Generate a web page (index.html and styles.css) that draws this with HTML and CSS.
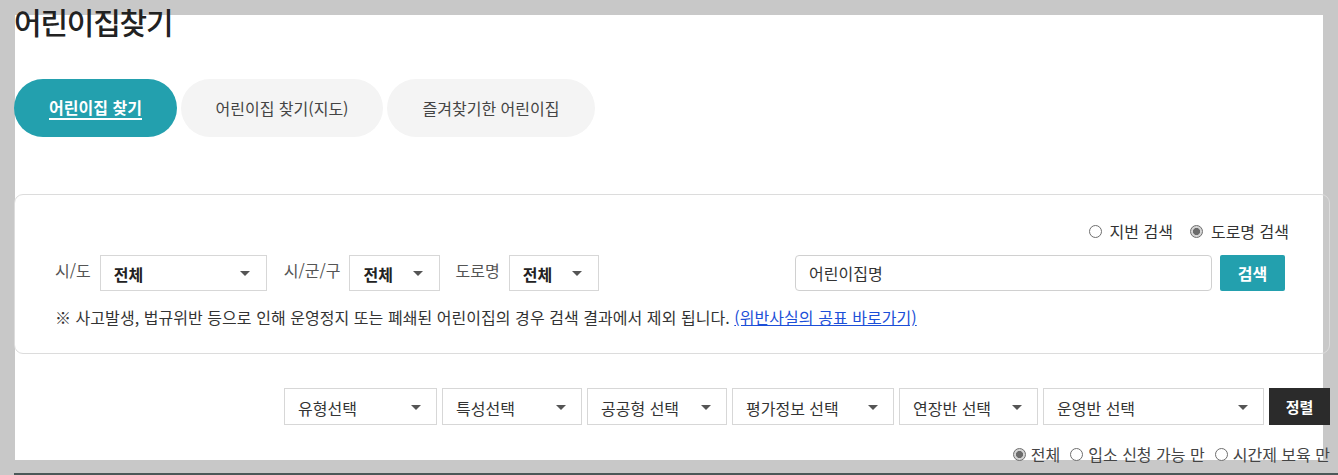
FILE: index.html
```html
<!DOCTYPE html>
<html lang="ko">
<head>
<meta charset="utf-8">
<title>어린이집찾기</title>
<link rel="stylesheet" href="styles.css">
</head>
<body>
<div class="page">
  <div class="inner">
    <h1 class="title">어린이집찾기</h1>
    <nav class="tabs">
      <a class="tab tab-active" href="#"><span class="tab-label">어린이집 찾기</span></a>
      <a class="tab tab-map" href="#">어린이집 찾기(지도)</a>
      <a class="tab tab-fav" href="#">즐겨찾기한 어린이집</a>
    </nav>

    <section class="search-box">
      <div class="radio-row">
        <label class="radio"><span class="radio-dot"></span>지번 검색</label>
        <label class="radio"><span class="radio-dot checked"></span>도로명 검색</label>
      </div>
      <div class="search-row">
        <span class="field-label">시/도</span>
        <div class="select select-bold sel-sido"><span>전체</span><i class="arrow"></i></div>
        <span class="field-label">시/군/구</span>
        <div class="select select-bold sel-sgg"><span>전체</span><i class="arrow"></i></div>
        <span class="field-label">도로명</span>
        <div class="select select-bold sel-road"><span>전체</span><i class="arrow"></i></div>
        <div class="name-group">
          <div class="name-input">어린이집명</div>
          <button class="btn-search">검색</button>
        </div>
      </div>
      <p class="notice">※ 사고발생, 법규위반 등으로 인해 운영정지 또는 폐쇄된 어린이집의 경우 검색 결과에서 제외 됩니다. <a href="#" class="notice-link">(위반사실의 공표 바로가기)</a></p>
    </section>

    <div class="filter-row">
      <div class="select sel-f1"><span>유형선택</span><i class="arrow"></i></div>
      <div class="select sel-f2"><span>특성선택</span><i class="arrow"></i></div>
      <div class="select sel-f3"><span>공공형 선택</span><i class="arrow"></i></div>
      <div class="select sel-f4"><span>평가정보 선택</span><i class="arrow"></i></div>
      <div class="select sel-f5"><span>연장반 선택</span><i class="arrow"></i></div>
      <div class="select sel-f6"><span>운영반 선택</span><i class="arrow"></i></div>
      <button class="btn-sort">정렬</button>
    </div>

    <div class="option-row">
      <label class="radio small"><span class="radio-dot checked"></span>전체</label>
      <label class="radio small"><span class="radio-dot"></span>입소 신청 가능 만</label>
      <label class="radio small"><span class="radio-dot"></span>시간제 보육 만</label>
    </div>
  </div>
</div>
<div class="footer-bar"></div>
</body>
</html>
```
FILE: styles.css
```css
* { box-sizing: border-box; }

html, body {
  margin: 0;
  padding: 0;
}

body {
  background: #c8c8c8;
  font-family: "Noto Sans CJK KR", "Noto Sans", sans-serif;
  color: #333;
  width: 1338px;
  height: 475px;
  overflow: hidden;
}

.page {
  margin: 15px 0 0 15px;
  width: 1308px;
  height: 445px;
  background: #fff;
}

.inner {
  margin-left: -1px;
  width: 1316px;
}

.title {
  margin: 0;
  position: relative;
  top: -12px;
  height: 36px;
  font-size: 30px;
  line-height: 36px;
  font-weight: 500;
  color: #222;
  letter-spacing: -1.2px;
}

.tabs {
  display: flex;
  gap: 4px;
  margin-top: 28px;
}

.tab {
  display: flex;
  align-items: center;
  justify-content: center;
  height: 58px;
  border-radius: 29px;
  background: #f4f4f4;
  color: #444;
  font-size: 16px;
  text-decoration: none;
}

.tab-active {
  width: 163px;
  background: #23a0ae;
  color: #fff;
  font-weight: 700;
}

.tab-label {
  border-bottom: 2px solid #fff;
  line-height: 20px;
  padding-bottom: 1px;
}

.tab-map { width: 202px; }
.tab-fav { width: 208px; }

.search-box {
  margin-top: 57px;
  height: 160px;
  border: 1px solid #dcdcdc;
  border-radius: 9px;
  padding: 26px 44px 0 40px;
}

.radio-row {
  display: flex;
  justify-content: flex-end;
  gap: 17px;
  margin-right: -4px;
  height: 20px;
}

.radio {
  display: flex;
  align-items: center;
  gap: 8px;
  font-size: 16px;
  line-height: 20px;
  color: #333;
}

.radio-dot {
  width: 13px;
  height: 13px;
  border: 1px solid #6e6e6e;
  border-radius: 50%;
  background: #fff;
  flex: none;
}

.radio-dot.checked {
  background: radial-gradient(circle, #6b6b6b 0 3.3px, #d4d4d4 3.8px 100%);
}

.search-row {
  display: flex;
  align-items: center;
  margin-top: 14px;
  height: 36px;
}

.field-label {
  font-size: 16px;
  color: #555;
  margin-right: 9px;
  position: relative;
  top: -3px;
}

.select {
  position: relative;
  display: flex;
  align-items: center;
  height: 36px;
  border: 1px solid #d7d7d7;
  background: #fff;
  padding-left: 13px;
  font-size: 16px;
  color: #333;
}

.select span {
  position: relative;
  top: 1px;
}

.select-bold { font-weight: 700; color: #222; }

.select .arrow {
  position: absolute;
  right: 16px;
  top: 50%;
  margin-top: -2px;
  width: 0;
  height: 0;
  border-left: 5px solid transparent;
  border-right: 5px solid transparent;
  border-top: 5px solid #555;
}

.sel-sido { width: 167px; margin-right: 17px; }
.sel-sgg { width: 91px; margin-right: 15px; }
.sel-road { width: 90px; }

.name-group {
  margin-left: auto;
  display: flex;
  gap: 8px;
}

.name-input {
  width: 417px;
  height: 36px;
  border: 1px solid #d0d0d0;
  border-radius: 4px;
  padding-left: 13px;
  display: flex;
  align-items: center;
  font-size: 16px;
  color: #333;
}

.btn-search {
  width: 65px;
  height: 36px;
  border: 0;
  border-radius: 2px;
  background: #23a0ae;
  color: #fff;
  font-family: inherit;
  font-size: 16px;
  font-weight: 700;
  padding: 0;
}

.notice {
  margin: 16px 0 0;
  font-size: 16px;
  line-height: 20px;
  color: #333;
  letter-spacing: 0.05px;
}

.notice-link {
  color: #1c4fd8;
  text-decoration: underline;
}

.filter-row {
  display: flex;
  justify-content: flex-end;
  gap: 5px;
  margin-top: 34px;
  height: 37px;
}

.filter-row .select { height: 37px; }
.filter-row .select .arrow { right: 15px; }

.sel-f1 { width: 153px; }
.sel-f2 { width: 140px; }
.sel-f3 { width: 140px; }
.sel-f4 { width: 162px; }
.sel-f5 { width: 139px; }
.sel-f6 { width: 221px; }

.btn-sort {
  width: 61px;
  height: 37px;
  border: 0;
  background: #2b2b2b;
  color: #fff;
  font-family: inherit;
  font-size: 15px;
  font-weight: 700;
  padding: 0;
}

.option-row {
  display: flex;
  justify-content: flex-end;
  gap: 10px;
  margin-top: 19px;
  height: 20px;
}

.radio.small { gap: 5px; color: #444; }

.footer-bar {
  margin: 13px 0 0 14px;
  height: 10px;
  background: #4b5858;
}
```
